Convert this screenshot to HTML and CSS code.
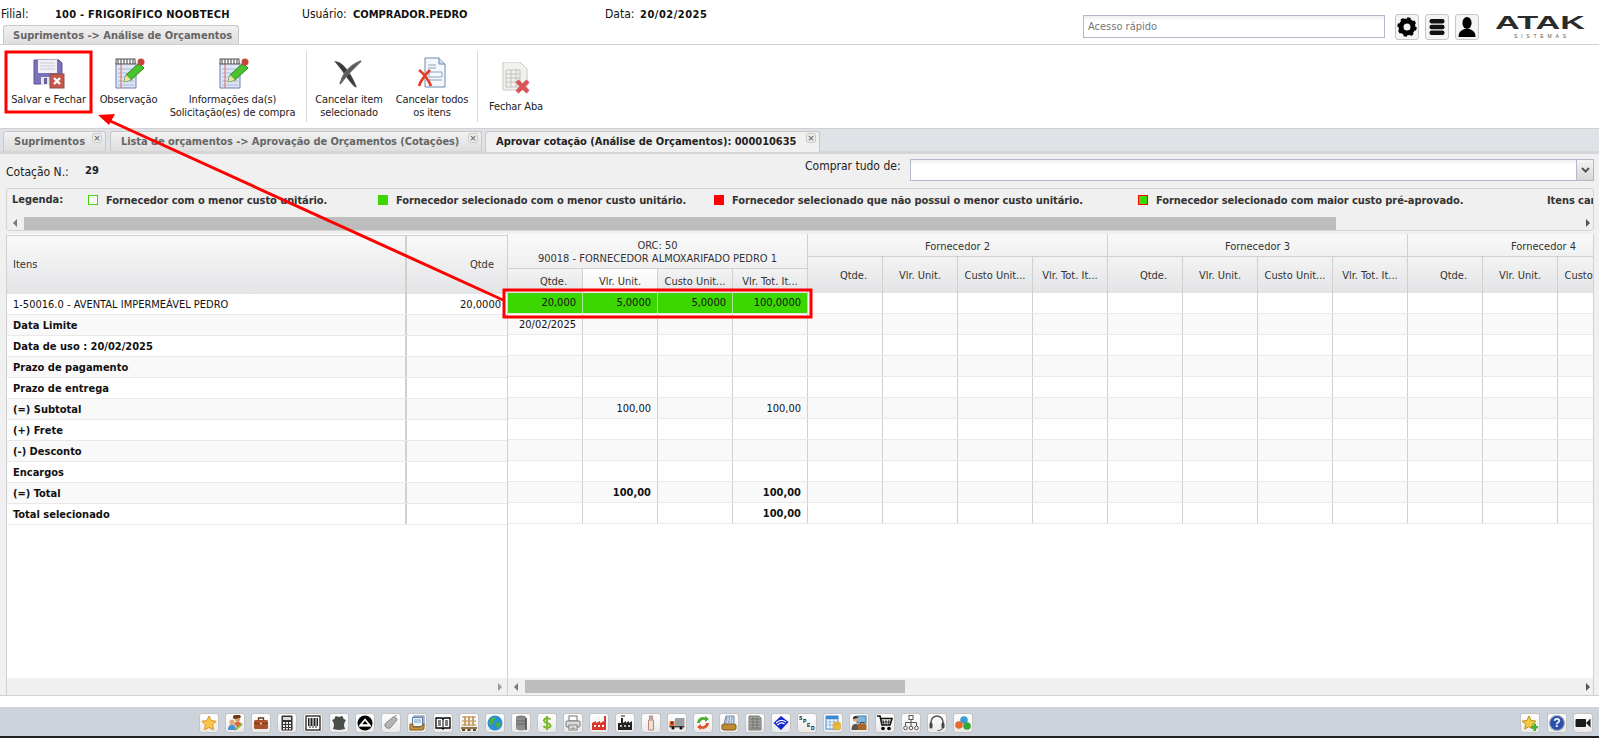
FILE: index.html
```html
<!DOCTYPE html>
<html lang="pt-BR">
<head>
<meta charset="utf-8">
<title>Análise de Orçamentos</title>
<link rel="stylesheet" href="styles.css">
</head>
<body>
<svg class="defs" width="0" height="0">
  <symbol id="note" viewBox="0 0 32 32">
    <path d="M3 6h20v25H3z" fill="#dfe5f5" stroke="#6a7fb8"/>
    <path d="M5 12h16M5 16h16M5 20h16M5 24h16M5 28h16" stroke="#a9b8dc"/>
    <path d="M8 6v25" stroke="#e06a5a"/>
    <rect x="3" y="2" width="19" height="5" fill="#fff" stroke="#555"/>
    <path d="M5 2v5M8 2v5M11 2v5M14 2v5M17 2v5M20 2v5" stroke="#444"/>
    <path d="M11 25l2-7 13-12 5 5-13 12z" fill="#4ac12e" stroke="#2c8a1e"/>
    <path d="M11 25l2-7 5 5z" fill="#f4dfa8"/>
    <circle cx="28" cy="5" r="3.5" fill="#c8453a"/>
  </symbol>
</svg>

<header class="top">
  <div class="info">
    <span class="lbl lbl-filial">Filial:</span>
    <b class="val val-filial">100 - FRIGORÍFICO NOOBTECH</b>
    <span class="lbl lbl-user">Usuário:</span>
    <b class="val val-user">COMPRADOR.PEDRO</b>
    <span class="lbl lbl-data">Data:</span>
    <b class="val val-date">20/02/2025</b>
  </div>
  <div class="top-right">
    <div class="quick">Acesso rápido</div>
    <button class="sq">
      <svg width="20" height="20" viewBox="0 0 20 20"><circle cx="10" cy="10" r="6" fill="none" stroke="#000" stroke-width="5"/><circle cx="10" cy="10" r="8" fill="none" stroke="#000" stroke-width="3.4" stroke-dasharray="3.1 3.18"/></svg>
    </button>
    <button class="sq">
      <svg width="20" height="20" viewBox="0 0 20 20"><rect x="2.5" y="2" width="15" height="4.6" rx="2" fill="#111"/><rect x="2.5" y="7.7" width="15" height="4.6" rx="2" fill="#111"/><rect x="2.5" y="13.4" width="15" height="4.6" rx="2" fill="#111"/></svg>
    </button>
    <button class="sq">
      <svg width="20" height="22" viewBox="0 0 20 22"><ellipse cx="10" cy="7" rx="4.6" ry="6" fill="#000"/><path d="M1.500 21c0-5 3-7 6-8h5c3 1 6 3 6 8z" fill="#000"/></svg>
    </button>
    <svg class="logo" width="94" height="24" viewBox="0 0 94 24">
      <text class="logo-main" x="47" y="13" text-anchor="middle" textLength="90" lengthAdjust="spacingAndGlyphs">ATAK</text>
      <text class="logo-sub" x="47" y="22" text-anchor="middle" textLength="52">SISTEMAS</text>
    </svg>
  </div>
  <div class="module-tab">Suprimentos -&gt; Análise de Orçamentos</div>
</header>

<nav class="toolbar">
  <div class="tool w87">
    <svg width="32" height="32" viewBox="0 0 32 32">
      <path d="M1 3h25l3 3v21H1z" fill="#7a72bb" stroke="#5b5497"/>
      <rect x="5" y="3" width="19" height="13" fill="#f2f2f6"/>
      <path d="M7 6h15M7 9h15M7 12h15" stroke="#c9c9d8"/>
      <rect x="8" y="20" width="12" height="8" fill="#e6e6ee"/>
      <rect x="11" y="21" width="3" height="6" fill="#6a629f"/>
      <rect x="17" y="17" width="14" height="14" fill="#c7574a" stroke="#8b4f46"/>
      <path d="M21 21l6 6M27 21l-6 6" stroke="#fff" stroke-width="2.400"/>
    </svg>
    <span>Salvar e Fechar</span>
  </div>
  <div class="tool w73">
    <svg width="32" height="32"><use href="#note"/></svg>
    <span>Observação</span>
  </div>
  <div class="tool w135">
    <svg width="32" height="32"><use href="#note"/></svg>
    <span>Informações da(s)<br>Solicitação(es) de compra</span>
  </div>
  <i class="sep sep1"></i>
  <div class="tool w84">
    <svg width="32" height="32" viewBox="0 0 32 32">
      <path d="M3 5c6 1 11 8 14 13 3 5 5 10 6 12-4-3-8-9-11-13C9 12 6 9 3 5z" fill="#333" stroke="#444" stroke-width="1.500"/>
      <path d="M28 4c-6 2-12 7-16 12-3 4-4 8-5 11 4-5 7-9 11-13 3-3 7-7 10-10z" fill="#555" stroke="#666" stroke-width="1.500"/>
    </svg>
    <span>Cancelar item<br>selecionado</span>
  </div>
  <div class="tool w82">
    <svg width="32" height="32" viewBox="0 0 32 32">
      <path d="M9 1h14l6 6v23H9z" fill="#f4f7fb" stroke="#6f8bb0"/>
      <path d="M23 1v6h6" fill="#cfdcec" stroke="#6f8bb0"/>
      <path d="M12 8h8M12 11h8M13 15h13v5H13zM13 23h13" stroke="#8ca4c4" fill="none"/>
      <path d="M3 13c4 3 9 9 12 16M14 13c-4 4-9 10-11 16" stroke="#e23b22" stroke-width="2.600" fill="none"/>
    </svg>
    <span>Cancelar todos<br>os itens</span>
  </div>
  <i class="sep sep2"></i>
  <div class="tool tool-low w76">
    <svg width="32" height="32" viewBox="0 0 32 32">
      <path d="M3 0h17l7 7v21H3z" fill="#f1f1ee" stroke="#c9c9c4"/>
      <path d="M6 8h14v17H6zM6 12h14M6 16h14M6 20h14M11 8v17M16 8v17" fill="none" stroke="#bcc4bc"/>
      <path d="M17 19l11 11M28 19L17 30" stroke="#d9545a" stroke-width="4.400"/>
    </svg>
    <span>Fechar Aba</span>
  </div>
</nav>

<div class="tabs">
  <div class="tab t1">Suprimentos<i class="x">×</i></div>
  <div class="tab t2">Lista de orçamentos -&gt; Aprovação de Orçamentos (Cotações)<i class="x">×</i></div>
  <div class="tab t3 active">Aprovar cotação (Análise de Orçamentos): 000010635<i class="x">×</i></div>
</div>

<main class="panel">
  <div class="quote">
    <span class="quote-lbl">Cotação N.:</span>
    <b class="quote-num">29</b>
    <span class="buy-lbl">Comprar tudo de:</span>
    <div class="select"><span class="select-btn"><svg width="9" height="6" viewBox="0 0 9 6"><path d="M1 1l3.500 3.500L8 1" fill="none" stroke="#555" stroke-width="2"/></svg></span></div>
  </div>

  <section class="legend">
    <div class="legend-row">
      <b>Legenda:</b>
      <b class="li"><i class="sw sw-empty"></i>Fornecedor com o menor custo unitário.</b>
      <b class="li"><i class="sw sw-green"></i>Fornecedor selecionado com o menor custo unitário.</b>
      <b class="li"><i class="sw sw-red"></i>Fornecedor selecionado que não possui o menor custo unitário.</b>
      <b class="li"><i class="sw sw-both"></i>Fornecedor selecionado com maior custo pré-aprovado.</b>
      <b class="li">Itens cancelados</b>
    </div>
    <div class="hbar hbar-legend">
      <i class="ar ar-l"></i><i class="thumb thumb-legend"></i><i class="ar ar-r"></i>
    </div>
  </section>

  <section class="grid">
    <div class="left">
      <div class="lhead">
        <div class="lc1">Itens</div>
        <div class="lc2">Qtde</div>
      </div>
      <div class="lrow"><div class="lc1">1-50016.0 - AVENTAL IMPERMEÁVEL PEDRO</div><div class="lc2">20,0000</div></div>
      <div class="lrow alt strong"><div class="lc1">Data Limite</div><div class="lc2"></div></div>
      <div class="lrow strong"><div class="lc1">Data de uso : 20/02/2025</div><div class="lc2"></div></div>
      <div class="lrow alt strong"><div class="lc1">Prazo de pagamento</div><div class="lc2"></div></div>
      <div class="lrow strong"><div class="lc1">Prazo de entrega</div><div class="lc2"></div></div>
      <div class="lrow alt strong"><div class="lc1">(=) Subtotal</div><div class="lc2"></div></div>
      <div class="lrow strong"><div class="lc1">(+) Frete</div><div class="lc2"></div></div>
      <div class="lrow alt strong"><div class="lc1">(-) Desconto</div><div class="lc2"></div></div>
      <div class="lrow strong"><div class="lc1">Encargos</div><div class="lc2"></div></div>
      <div class="lrow alt strong"><div class="lc1">(=) Total</div><div class="lc2"></div></div>
      <div class="lrow strong"><div class="lc1">Total selecionado</div><div class="lc2"></div></div>
      <div class="spacer"></div>
      <div class="hbar hbar-grid"><i class="ar ar-r ar-grey"></i></div>
    </div>

    <div class="right">
      <div class="rhead">
        <div class="vendor">
          <div class="vt vt-orc">ORC: 50<br>90018 - FORNECEDOR ALMOXARIFADO PEDRO 1</div>
          <div class="subs subs-orc"><div>Qtde.</div><div class="hov">Vlr. Unit.</div><div>Custo Unit...</div><div>Vlr. Tot. It...</div></div>
        </div>
        <div class="vendor">
          <div class="vt">Fornecedor 2</div>
          <div class="subs"><div>Qtde.</div><div>Vlr. Unit.</div><div>Custo Unit...</div><div>Vlr. Tot. It...</div></div>
        </div>
        <div class="vendor">
          <div class="vt">Fornecedor 3</div>
          <div class="subs"><div>Qtde.</div><div>Vlr. Unit.</div><div>Custo Unit...</div><div>Vlr. Tot. It...</div></div>
        </div>
        <div class="vendor">
          <div class="vt vt-last"><span>Fornecedor 4</span></div>
          <div class="subs"><div>Qtde.</div><div>Vlr. Unit.</div><div>Custo Unit...</div><div>Vlr. Tot. It...</div></div>
        </div>
      </div>
      <div class="rrow sel"><div class="c">20,000</div><div class="c">5,0000</div><div class="c">5,0000</div><div class="c">100,0000</div><div class="rest"></div></div>
      <div class="rrow alt"><div class="c">20/02/2025</div><div class="c"></div><div class="c"></div><div class="c"></div><div class="rest"></div></div>
      <div class="rrow"><div class="c"></div><div class="c"></div><div class="c"></div><div class="c"></div><div class="rest"></div></div>
      <div class="rrow alt"><div class="c"></div><div class="c"></div><div class="c"></div><div class="c"></div><div class="rest"></div></div>
      <div class="rrow"><div class="c"></div><div class="c"></div><div class="c"></div><div class="c"></div><div class="rest"></div></div>
      <div class="rrow alt"><div class="c"></div><div class="c">100,00</div><div class="c"></div><div class="c">100,00</div><div class="rest"></div></div>
      <div class="rrow"><div class="c"></div><div class="c"></div><div class="c"></div><div class="c"></div><div class="rest"></div></div>
      <div class="rrow alt"><div class="c"></div><div class="c"></div><div class="c"></div><div class="c"></div><div class="rest"></div></div>
      <div class="rrow"><div class="c"></div><div class="c"></div><div class="c"></div><div class="c"></div><div class="rest"></div></div>
      <div class="rrow alt strong"><div class="c"></div><div class="c">100,00</div><div class="c"></div><div class="c">100,00</div><div class="rest"></div></div>
      <div class="rrow strong"><div class="c"></div><div class="c"></div><div class="c"></div><div class="c">100,00</div><div class="rest"></div></div>
      <div class="spacer"></div>
      <div class="hbar hbar-grid">
        <i class="ar ar-l"></i><i class="thumb thumb-grid"></i><i class="ar ar-r"></i>
      </div>
    </div>
  </section>
</main>

<footer class="dock">
  <div class="d"><svg viewBox="0 0 16 16"><path d="M8 1l2.200 4.600 5 .7-3.600 3.500.9 5L8 12.400 3.500 14.800l.9-5L.8 6.300l5-.7z" fill="#f7c646" stroke="#d9962a"/></svg></div>
  <div class="d"><svg viewBox="0 0 16 16"><circle cx="5" cy="7" r="2.600" fill="#e3a878"/><circle cx="10.500" cy="4" r="2.600" fill="#d89a62"/><path d="M6 3a4 3 0 0 1 8-1l-1 1-6 1z" fill="#6b3d1c"/><path d="M1 15c0-4 2-5.500 4-5.500S9 11 9 15z" fill="#4f8fd0"/><path d="M7 9c1-2 3-2.500 4-2.500s3 1 3.500 3L11 13z" fill="#d96a3a"/><path d="M8 15l7-6" stroke="#86b83c" stroke-width="2"/></svg></div>
  <div class="d"><svg viewBox="0 0 16 16"><path d="M5.500 5V3h5v2" fill="none" stroke="#6e3315" stroke-width="1.300"/><rect x="1" y="5" width="14" height="9" rx="1.500" fill="#a9512a"/><rect x="1" y="8" width="14" height="1" fill="#7b3717"/><rect x="7" y="7.500" width="2" height="2" fill="#e8c07a"/></svg></div>
  <div class="d"><svg viewBox="0 0 16 16"><rect x="2.500" y="0.500" width="11" height="15" rx="1" fill="#333"/><rect x="4" y="2" width="8" height="3" fill="#ddd"/><path d="M4 7h2v2H4zM7 7h2v2H7zM10 7h2v2h-2zM4 10h2v2H4zM7 10h2v2H7zM10 10h2v2h-2zM4 13h2v1.500H4zM7 13h2v1.500H7zM10 13h2v1.500h-2z" fill="#eee"/></svg></div>
  <div class="d"><svg viewBox="0 0 16 16"><rect x="1" y="1" width="14" height="14" fill="#fff" stroke="#111" stroke-width="1.200"/><path d="M3.500 3v8M5 3v10M6.500 3v8M8 3v10M9.500 3v8M11 3v10M12.500 3v8" stroke="#222"/></svg></div>
  <div class="d"><svg viewBox="0 0 16 16"><path d="M5 1c1 1 5 1 6 0l1 1c0 2 1 2 3 3-1 2-2 3-2 5s1 3 1 4c-2 0-3 1-6 1s-4-1-6-1c0-1 1-2 1-4S2 7 1 5c2-1 3-1 3-3z" fill="#4a4d49"/></svg></div>
  <div class="d"><svg viewBox="0 0 16 16"><circle cx="8" cy="8" r="7.500" fill="#000"/><path d="M8 4.500l4.500 5.500h-9z" fill="none" stroke="#fff" stroke-width="1.600"/><rect x="2" y="10" width="12" height="1.600" fill="#fff"/></svg></div>
  <div class="d"><svg viewBox="0 0 16 16"><path d="M2 9l8-7c2-1 4 1 4 3l-7 8c-2 1-6-1-5-4z" fill="#b4b4b4" stroke="#888"/><path d="M2 10c0 2 1 3 3 3.500L3 13z" fill="#d8392c"/><path d="M12 1l2-1" stroke="#888"/></svg></div>
  <div class="d"><svg viewBox="0 0 16 16"><rect x="5" y="1" width="10" height="9" fill="#dbe7f6" stroke="#5c7ea8"/><rect x="3.500" y="2.500" width="10" height="9" fill="#eef4fb" stroke="#5c7ea8"/><path d="M5 5h7M5 7h7" stroke="#7d9cc2"/><path d="M1 9h3v3h8l2-3h1v5l-2 1H1z" fill="#c9943d" stroke="#86601f"/></svg></div>
  <div class="d"><svg viewBox="0 0 16 16"><path d="M1 3h6l1 1 1-1h6v10H9l-1 1-1-1H1z" fill="#fff" stroke="#000" stroke-width="1.300"/><path d="M3 6h3M3 8h3M3 10h3M10 6h3M10 8h3M10 10h3M8 4v10" stroke="#000"/></svg></div>
  <div class="d"><svg viewBox="0 0 16 16"><path d="M1 1h14v2H1zM1 5h14v2H1zM1 9h14v2H1z" fill="#d9bd8c"/><path d="M3 1h2v10H3zM7 1h2v10H7zM11 1h2v10h-2z" fill="#c4a36c"/><path d="M0 12h16v2H0z" fill="#8f7346"/><path d="M1 14h3v2H1zM6.500 14h3v2h-3zM12 14h3v2h-3z" fill="#5f4a2b"/></svg></div>
  <div class="d"><svg viewBox="0 0 16 16"><circle cx="8" cy="8" r="7.500" fill="#2a8fd8"/><path d="M3 4c2-1 4-2 6-2 0 2-2 2-2 4s-2 3-3 5C2 9 2 6 3 4zM9 8c2-1 4 0 5 1-1 2-2 4-4 4 0-2-2-3-1-5z" fill="#4cb13c"/></svg></div>
  <div class="d"><svg viewBox="0 0 16 16"><ellipse cx="8" cy="2.500" rx="5" ry="2" fill="#7f7f7f"/><path d="M3 2.500h10V13c0 1.500-2 2.500-5 2.500S3 14.500 3 13z" fill="#8e8e8e"/><path d="M3 6h10M3 9h10" stroke="#666"/><path d="M13 3v12" stroke="#444" stroke-width="1.500"/></svg></div>
  <div class="d"><svg viewBox="0 0 16 16"><path d="M11.500 4.500C10.500 3 5.500 2.500 5 5.500c-.4 3 6.800 2 6.500 5.300C11 13.500 5.500 13 4.500 11M8 1v14" fill="none" stroke="#7ab92f" stroke-width="2"/></svg></div>
  <div class="d"><svg viewBox="0 0 16 16"><rect x="4" y="1" width="8" height="5" fill="#fff" stroke="#777"/><rect x="1" y="6" width="14" height="6" rx="1" fill="#ddd" stroke="#777"/><rect x="4" y="10" width="8" height="5" fill="#fff" stroke="#777"/><path d="M5.500 12h5M5.500 13.500h5" stroke="#999"/></svg></div>
  <div class="d"><svg viewBox="0 0 16 16"><path d="M1 15V8l4-2v2l4-2v2l4-2V1h2v14z" fill="#d9392b"/><rect x="3" y="10" width="2" height="2" fill="#fff"/><rect x="7" y="10" width="2" height="2" fill="#fff"/><rect x="11" y="10" width="2" height="2" fill="#fff"/></svg></div>
  <div class="d"><svg viewBox="0 0 16 16"><path d="M1 15V8h3V3h2v5l3-2v2l3-2v2l3-2v9z" fill="#222"/><path d="M2 1h3M3 11h2M7 11h2M11 11h2" stroke="#eee" stroke-width="1.500"/><path d="M4 1h4" stroke="#222"/></svg></div>
  <div class="d"><svg viewBox="0 0 16 16"><rect x="6.500" y="1" width="3" height="3" fill="#c9b3a8" stroke="#a88"/><path d="M5.500 5h5v10h-5z" fill="#f3dcd2" stroke="#b58a7c"/></svg></div>
  <div class="d"><svg viewBox="0 0 16 16"><rect x="6" y="3" width="9.500" height="8" fill="#9aa0a3"/><path d="M1 6h4.500v6H.500V8z" fill="#e8601f"/><rect x="2" y="7" width="2" height="2" fill="#333"/><rect x="0.500" y="11" width="15" height="1.400" fill="#444"/><circle cx="4" cy="13" r="1.600" fill="#111"/><circle cx="12" cy="13" r="1.600" fill="#111"/></svg></div>
  <div class="d"><svg viewBox="0 0 16 16"><path d="M2 8a6 6 0 0 1 8-5.500V1l4 3-4 3V5a3.500 3.500 0 0 0-5 3z" fill="#4cab35"/><path d="M14 8a6 6 0 0 1-8 5.500V15l-4-3 4-3v2a3.500 3.500 0 0 0 5-3z" fill="#e2522c"/></svg></div>
  <div class="d"><svg viewBox="0 0 16 16"><path d="M5 1h8v9H3z" fill="#d5e2f2" stroke="#6a7f9c"/><path d="M5 3h7M5 5h7M4.500 7h7" stroke="#6a7f9c" stroke-dasharray="1.500 1"/><path d="M1 10l2-1h10l2 1v4l-2 1H3l-2-1z" fill="#c08a32" stroke="#7f5a1c"/></svg></div>
  <div class="d"><svg viewBox="0 0 16 16"><path d="M2 1h10l2 2v12H2z" fill="#a9a9a4" stroke="#777"/><path d="M3 4h10M3 7h10M3 10h10M3 13h10M6 2v12M10 2v12" stroke="#6f6f6a"/></svg></div>
  <div class="d"><svg viewBox="0 0 16 16"><path d="M8 1l7.500 6-7.500 8-7.500-7z" fill="#1226d8"/><path d="M3 8c3-3 7-3 10-1M4.500 10c2-2 5-2.500 7-1" fill="none" stroke="#fff" stroke-width="1.300"/></svg></div>
  <div class="d"><svg viewBox="0 0 16 16"><text class="sped" x="0" y="5">S</text><text class="sped" x="4" y="8">P</text><text class="sped" x="8" y="11.500">E</text><text class="sped" x="12" y="15">D</text></svg></div>
  <div class="d"><svg viewBox="0 0 16 16"><rect x="1" y="1" width="12" height="13" fill="#f5f9fe" stroke="#3c89cf"/><path d="M1 4h12M1 7h12M1 10h12M5 1v13M9 1v13" stroke="#8cbbe5"/><rect x="1" y="1" width="12" height="3" fill="#3c89cf"/><ellipse cx="12" cy="8" rx="3.500" ry="1.500" fill="#eab93d"/><path d="M8 9h7.500v5c0 1-7.500 1-7.500 0z" fill="#eab93d" stroke="#c69227" stroke-width=".5"/></svg></div>
  <div class="d"><svg viewBox="0 0 16 16"><rect x="6" y="1" width="9" height="7" fill="#7fb6e0" stroke="#3b78a8"/><circle cx="4.500" cy="4" r="2.600" fill="#e0aa7d"/><path d="M2 4a2.500 2.500 0 0 1 5-1z" fill="#3d2a18"/><path d="M0.500 15c0-5 2-6 4-6s4 1 4 6z" fill="#555"/><rect x="7" y="9" width="8.500" height="6" fill="#a9642a"/><path d="M9.500 9V7.500h3.500V9" fill="none" stroke="#6e3f16"/></svg></div>
  <div class="d"><svg viewBox="0 0 16 16"><path d="M0 1h3l2 9h8l2-6.500H4" fill="none" stroke="#111" stroke-width="1.600"/><path d="M6 5l1 5M9 5v5M12 5l-1 5M4.500 7h9" stroke="#333"/><circle cx="6" cy="13.500" r="1.800" fill="#000"/><circle cx="12" cy="13.500" r="1.800" fill="#000"/></svg></div>
  <div class="d"><svg viewBox="0 0 16 16"><rect x="6" y="0.500" width="4" height="4" fill="#fff" stroke="#555"/><path d="M8 4.500v3M2.500 11V7.500h11V11M8 7.500V11" fill="none" stroke="#555"/><circle cx="2.500" cy="13" r="1.800" fill="#fff" stroke="#555"/><circle cx="8" cy="13" r="1.800" fill="#fff" stroke="#555"/><circle cx="13.500" cy="13" r="1.800" fill="#fff" stroke="#555"/></svg></div>
  <div class="d"><svg viewBox="0 0 16 16"><path d="M2 9V7a6 6 0 0 1 12 0v2" fill="none" stroke="#555" stroke-width="1.600"/><rect x="0.500" y="7.500" width="3" height="6" rx="1.500" fill="#444"/><rect x="12.500" y="7.500" width="3" height="6" rx="1.500" fill="#444"/><path d="M13.500 13c0 2-3 2.500-5 2.500" fill="none" stroke="#555"/></svg></div>
  <div class="d"><svg viewBox="0 0 16 16"><circle cx="9" cy="5" r="3.800" fill="#38a0d8"/><circle cx="4" cy="10" r="3.800" fill="#e86a2c"/><circle cx="12" cy="11" r="3.800" fill="#35a83a"/></svg></div>
  <div class="dock-right">
    <div class="d"><svg viewBox="0 0 16 16"><path d="M7 1l2 4.500 4.800.6-3.500 3.200.9 4.700L7 11.600 2.800 14l.9-4.700L.2 6.100 5 5.500z" fill="#f3cb3c" stroke="#b8901c"/><path d="M9 11h2.500V8.500h2.500V11h2v2.500h-2V16h-2.500v-2.500H9z" fill="#3db33a"/></svg></div>
    <div class="d"><svg viewBox="0 0 16 16"><circle cx="8" cy="8" r="7.500" fill="#2c4fa8" stroke="#aab2c4" stroke-width="1.200"/><text class="help" x="8" y="12.300" text-anchor="middle">?</text></svg></div>
    <div class="d"><svg viewBox="0 0 16 16"><rect x="0.500" y="4" width="10.500" height="8" rx="1" fill="#1b1b1b"/><path d="M11.500 7.500L15.500 3.500v9l-4-4z" fill="#1b1b1b"/></svg></div>
  </div>
</footer>
<div class="edge"></div>

<svg class="marks" width="1599" height="738" viewBox="0 0 1599 738">
  <rect x="6" y="52" width="85" height="60" fill="none" stroke="#f00" stroke-width="3"/>
  <rect x="504" y="290" width="307" height="27" fill="none" stroke="#f00" stroke-width="3"/>
  <path d="M503 300L108 120" stroke="#f00" stroke-width="3"/>
  <path d="M98 115l17-1-6 11z" fill="#f00"/>
</svg>
</body>
</html>
```

FILE: styles.css
```css
* { box-sizing: border-box; }
html, body { margin: 0; height: 738px; overflow: hidden; }
body {
  position: relative;
  width: 1599px;
  display: flex;
  flex-direction: column;
  background: #fff;
  color: #222;
  font: 11px/13px "DejaVu Sans Condensed", "DejaVu Sans", sans-serif;
}
b { font-weight: 700; }
i { font-style: normal; }
.defs { position: absolute; }

/* header */
.top {
  position: relative;
  flex: none;
  height: 45px;
  border-bottom: 1px solid #d0d0d0;
}
.info {
  display: flex;
  align-items: center;
  height: 26px;
  padding: 2px 0 0 1px;
  color: #111;
}
.lbl { font-size: 12px; }
.lbl-filial { width: 54px; }
.val-filial { width: 247px; letter-spacing: .23px; }
.lbl-user { width: 51px; }
.val-user { width: 252px; }
.lbl-data { width: 35px; }
.val-date { letter-spacing: .5px; }
.top-right {
  position: absolute;
  top: 14px;
  right: 12px;
  display: flex;
  align-items: flex-start;
  gap: 6px;
}
.quick {
  width: 302px;
  height: 23px;
  margin: 1px 4px 0 0;
  padding: 4px 4px 0;
  color: #777;
  border: 1px solid #b5b8c8;
  background: linear-gradient(#eee, #fff 5px);
}
.sq {
  width: 24px;
  height: 26px;
  padding: 0;
  display: flex;
  align-items: center;
  justify-content: center;
  border: 1px solid #c6c6c6;
  border-radius: 3px;
  background: #f4f4f4;
}
.logo { margin: 2px 0 0 8px; overflow: visible; }
.logo-main { font: 700 18px "Liberation Sans", sans-serif; fill: #2b2b2b; }
.logo-sub { font: 5px "Liberation Sans", sans-serif; fill: #555; }
.module-tab {
  position: absolute;
  left: 3px;
  bottom: 0;
  width: 236px;
  height: 19px;
  padding: 3px 0 0 9px;
  font-weight: 700;
  color: #666;
  border: 1px solid #c8c8c8;
  border-bottom: 0;
  border-radius: 3px 3px 0 0;
  background: linear-gradient(#f1f1f1, #dedede);
}

/* toolbar */
.toolbar {
  flex: none;
  display: flex;
  height: 84px;
  padding: 6px 0 0 5px;
  border-bottom: 1px solid #d0d0d0;
}
.tool {
  flex: none;
  display: flex;
  flex-direction: column;
  align-items: center;
  padding-top: 6px;
  text-align: center;
  color: #222;
  letter-spacing: -.12px;
}
.tool svg { flex: none; margin-bottom: 4px; }
.tool-low { padding-top: 11px; }
.tool-low svg { margin-bottom: 6px; }
.w87 { width: 87px; }
.w73 { width: 73px; }
.w135 { width: 135px; }
.w84 { width: 84px; }
.w82 { width: 82px; }
.w76 { width: 76px; }
.sep { flex: none; width: 1px; height: 71px; background: #d8d8d8; }
.sep1 { margin-left: 6px; }
.sep2 { margin-left: 4px; }

/* tabs */
.tabs {
  flex: none;
  display: flex;
  gap: 4px;
  height: 25px;
  padding: 2px 0 0 3px;
  background: #dfe3e8;
  border-bottom: 3px solid #d4d6d8;
}
.tab {
  position: relative;
  height: 20px;
  padding: 3px 0 0 10px;
  font-weight: 700;
  color: #666;
  border: 1px solid #c8c8c8;
  border-bottom: 0;
  border-radius: 3px 3px 0 0;
  background: linear-gradient(#f1f1f1, #dedede);
}
.t1 { width: 103px; }
.t2 { width: 372px; letter-spacing: -.08px; }
.t3 { width: 335px; margin-left: -1px; letter-spacing: -.03px; }
.active { color: #222; background: #f0f0f0; height: 21px; }
.x {
  position: absolute;
  top: 1px;
  right: 3px;
  width: 10px;
  height: 10px;
  font: 700 9px/9px "DejaVu Sans", sans-serif;
  text-align: center;
  color: #777;
  border: 1px solid #ccc;
  border-radius: 2px;
  background: #eee;
}

/* content */
.panel {
  flex: none;
  display: flex;
  flex-direction: column;
  height: 542px;
  padding: 0 5px 0 6px;
  background: #f0f0f0;
  border-bottom: 1px solid #d0d0d0;
}
.quote { flex: none; display: flex; align-items: flex-start; height: 34px; }
.quote-lbl { width: 79px; margin-top: 12px; color: #222; font-size: 12px; }
.quote-num { width: 720px; margin-top: 10px; }
.buy-lbl { width: 105px; margin-top: 6px; color: #222; font-size: 12px; white-space: nowrap; }
.select {
  position: relative;
  width: 684px;
  height: 22px;
  margin-top: 5px;
  border: 1px solid #b5b8c8;
  background: linear-gradient(#eee, #fff 5px);
}
.select-btn {
  position: absolute;
  top: 0;
  right: 0;
  width: 17px;
  height: 20px;
  display: flex;
  align-items: center;
  justify-content: center;
  background: linear-gradient(#f4f4f4, #d6d6d6);
  border-left: 1px solid #b5b8c8;
}
.legend {
  flex: none;
  height: 43px;
  padding-top: 4px;
  border: 1px solid #d4d4d4;
  border-radius: 3px;
  overflow: hidden;
  color: #333;
}
.legend-row {
  display: grid;
  grid-template-columns: 76px 290px 336px 424px 409px 60px;
  height: 14px;
  padding-left: 5px;
  white-space: nowrap;
  overflow: hidden;
  letter-spacing: -.07px;
}
.li { display: flex; align-items: center; }
.sw { flex: none; width: 10px; height: 10px; margin-right: 8px; }
.sw-empty { border: 1px solid #3cd700; background: #fff; }
.sw-green { background: #3cd700; }
.sw-red { background: #f00; }
.sw-both { background: #3cd700; border: 1px solid #f00; }
.hbar {
  position: relative;
  display: flex;
  align-items: center;
}
.hbar-legend { height: 14px; margin-top: 9px; }
.thumb { display: block; height: 13px; background: #bdbdbd; }
.thumb-legend { width: 1312px; margin-left: 7px; }
.ar { flex: none; width: 0; height: 0; border: 4px solid transparent; }
.ar-l { margin-left: 6px; border-left-width: 0; border-right: 4px solid #777; }
.ar-r { position: absolute; right: 3px; border-right-width: 0; border-left: 4px solid #555; }
.ar-grey { right: 5px; border-left-color: #999; }

/* grid */
.grid {
  flex: 1;
  min-height: 0;
  display: flex;
  margin-top: 3px;
  background: #fff;
  border-right: 1px solid #d0d0d0;
  color: #111;
}
.left, .right { display: flex; flex-direction: column; min-height: 0; }
.left { flex: none; width: 502px; padding-top: 1px; border-left: 1px solid #d0d0d0; border-right: 1px solid #d0d0d0; }
.right { flex: 1; min-width: 0; overflow: hidden; }
.lhead {
  flex: none;
  display: flex;
  height: 59px;
  color: #333;
  background: linear-gradient(#f9f9f9, #e3e4e6);
  border-top: 1px solid #d0d0d0;
}
.lhead .lc1, .lhead .lc2 { padding-top: 22px; }
.lhead .lc2 { padding-right: 13px; }
.lrow { flex: none; display: flex; height: 21px; border-bottom: 1px solid #e9e9e9; }
.lc1 { flex: none; width: 400px; padding: 4px 0 0 6px; border-right: 2px solid #d0d0d0; }
.lc2 { flex: 1; padding: 4px 6px 0 0; text-align: right; }
.alt { background: #f9f9f9; }
.strong { font-weight: 700; }
.spacer { flex: 1; min-height: 0; }
.hbar-grid { flex: none; height: 17px; background: #f0f0f0; }
.thumb-grid { width: 380px; margin-left: 7px; }

.rhead { flex: none; display: flex; height: 59px; color: #333; }
.vendor { flex: none; width: 300px; display: flex; flex-direction: column; }
.vt {
  flex: none;
  height: 23px;
  padding-top: 6px;
  text-align: center;
  background: linear-gradient(#f9f9f9, #f0f0f0);
  border-right: 1px solid #d0d0d0;
  border-bottom: 1px solid #d0d0d0;
}
.vt-orc { height: 35px; padding-top: 5px; }
.vt-last { text-align: left; }
.vt-last span { display: block; width: 271px; text-align: center; }
.subs {
  flex: 1;
  display: grid;
  grid-template-columns: repeat(4, 75px);
  background: linear-gradient(#f3f3f3, #e3e4e6);
}
.subs div {
  display: flex;
  align-items: center;
  justify-content: center;
  border-right: 1px solid #d0d0d0;
  white-space: nowrap;
}
.subs div:first-child { padding-left: 17px; }
.hov { background: linear-gradient(#fff, #f1f1f1); }
.rrow { flex: none; display: flex; height: 21px; border-bottom: 1px solid #e9e9e9; }
.c {
  flex: none;
  width: 75px;
  padding: 4px 6px 0 0;
  text-align: right;
  border-right: 1px solid #d0d0d0;
}
.rest {
  flex: 1;
  background: repeating-linear-gradient(90deg, transparent 0 74px, #d0d0d0 74px 75px);
}
.sel .c { padding-top: 3px; background: #3cd700; border-right-color: #a6e88f; color: #111; }

/* dock */
.dock {
  flex: none;
  display: flex;
  gap: 6px;
  height: 29px;
  margin-top: 11px;
  padding: 6px 6px 0 199px;
  background: #cdd3da;
}
.d {
  flex: none;
  width: 20px;
  height: 20px;
  display: flex;
  align-items: center;
  justify-content: center;
  border: 1px solid #c4c4c4;
  border-radius: 3px;
  background: linear-gradient(#fff, #e9e9e9);
}
.d svg { width: 16px; height: 16px; }
.dock-right { display: flex; gap: 6.500px; margin-left: auto; }
.sped { font: 700 5px "Liberation Sans", sans-serif; fill: #111; }
.help { font: 700 12px "Liberation Sans", sans-serif; fill: #fff; }
.edge { flex: none; height: 2px; background: #222; }

/* annotations drawn over the page */
.marks { position: absolute; top: 0; left: 0; pointer-events: none; }
```
